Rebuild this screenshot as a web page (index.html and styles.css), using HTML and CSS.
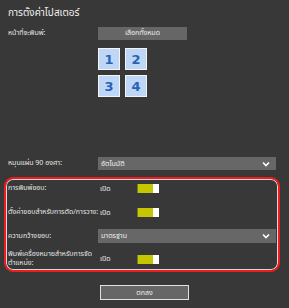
FILE: index.html
```html
<!DOCTYPE html>
<html lang="th">
<head>
<meta charset="utf-8">
<link rel="stylesheet" href="styles.css">
</head>
<body>
<div class="panel">
  <h1 class="title">การตั้งค่าโปสเตอร์</h1>
  <div class="row row-pages">
    <span class="label">หน้าที่จะพิมพ์:</span>
    <button class="btn">เลือกทั้งหมด</button>
  </div>
  <div class="tiles">
    <div class="tile">1</div>
    <div class="tile">2</div>
    <div class="tile">3</div>
    <div class="tile">4</div>
  </div>
  <div class="row row-rotate">
    <span class="label">หมุนแผ่น 90 องศา:</span>
    <div class="select"><span>อัตโนมัติ</span><svg class="chev" width="8" height="6" viewBox="0 0 8 6"><path d="M1 1.5 L4 4.5 L7 1.5" fill="none" stroke="#fff" stroke-width="1.6"/></svg></div>
  </div>
  <div class="box">
    <div class="row r1">
      <span class="label">การพิมพ์ขอบ:</span>
      <div class="val"><span class="on">เปิด</span><span class="toggle"><span class="knob"></span></span></div>
    </div>
    <div class="row r2">
      <span class="label">ตั้งค่าขอบสำหรับการตัด/การวาง:</span>
      <div class="val"><span class="on">เปิด</span><span class="toggle"><span class="knob"></span></span></div>
    </div>
    <div class="row r3">
      <span class="label">ความกว้างขอบ:</span>
      <div class="select"><span>มาตรฐาน</span><svg class="chev" width="8" height="6" viewBox="0 0 8 6"><path d="M1 1.5 L4 4.5 L7 1.5" fill="none" stroke="#fff" stroke-width="1.6"/></svg></div>
    </div>
    <div class="row r4">
      <span class="label two">พิมพ์เครื่องหมายสำหรับการจัด<br>ตำแหน่ง:</span>
      <div class="val"><span class="on">เปิด</span><span class="toggle"><span class="knob"></span></span></div>
    </div>
  </div>
  <div class="footer">
    <button class="ok">ตกลง</button>
  </div>
</div>
</body>
</html>
```
FILE: styles.css
```css
html, body {
  margin: 0;
  padding: 0;
  background: #383838;
  width: 289px;
  height: 308px;
  overflow: hidden;
}
body {
  font-family: "Tahoma", "Noto Sans Thai", "Noto Sans", "DejaVu Sans", sans-serif;
  color: #e8e8e8;
}
.panel {
  padding: 6px 13px 0 8px;
}
.title {
  margin: 0;
  font-size: 10px;
  font-weight: normal;
  line-height: 14px;
  height: 14px;
  color: #f2f2f2;
}
.row {
  display: grid;
  grid-template-columns: 90px 178px;
  align-items: center;
}
.label {
  font-size: 7px;
  line-height: 9px;
  color: #e6e6e6;
  white-space: nowrap;
}
.row-pages {
  margin-top: 7px;
  height: 13px;
}
.btn {
  width: 89px;
  height: 13px;
  border: 0;
  padding: 0;
  background: #666;
  color: #eee;
  font-family: inherit;
  font-size: 7px;
  line-height: 13px;
}
.tiles {
  margin: 8px 0 0 90px;
  display: grid;
  grid-template-columns: 22px 22px;
  grid-auto-rows: 22px;
  column-gap: 5px;
  row-gap: 5px;
  width: 49px;
  height: 49px;
}
.tile {
  box-sizing: border-box;
  border: 1px solid #f4f4f4;
  background: #bfd7f7;
  color: #2b62b4;
  font-family: "DejaVu Sans", sans-serif;
  font-weight: bold;
  font-size: 13px;
  display: flex;
  align-items: center;
  justify-content: center;
}
.row-rotate {
  margin-top: 60px;
  height: 13px;
}
.select {
  box-sizing: border-box;
  height: 13px;
  width: 178px;
  background: #676767;
  display: flex;
  align-items: center;
  justify-content: space-between;
  padding: 0 6px 0 3px;
  font-size: 7px;
  color: #f0f0f0;
}
.chev {
  display: block;
}
.box {
  margin: 7px 0 0 -4px;
  width: 276px;
  height: 95px;
  box-sizing: border-box;
  border: 2px solid #ee1c1c;
  border-radius: 9px;
  box-shadow: inset 0 0 0 1px #d8d8d8;
  padding: 2px 0 0 2px;
}
.box .row {
  grid-template-columns: 90px 178px;
}
.r1 { height: 15px; }
.r2 { height: 15px; margin-top: 9px; }
.r3 { height: 14px; margin-top: 9px; }
.r3 .select { height: 14px; }
.r4 { height: 20px; margin-top: 6px; }
.label.two {
  white-space: normal;
  line-height: 9px;
}
.val {
  display: flex;
  align-items: center;
  padding-left: 2px;
}
.on {
  width: 37px;
  font-size: 7px;
  color: #f0f0f0;
}
.toggle {
  position: relative;
  box-sizing: border-box;
  width: 22px;
  height: 9px;
  background: #c6c600;
  border-left: 1px solid #7a7a20;
  display: block;
}
.knob {
  position: absolute;
  right: 0;
  top: 0;
  width: 6px;
  height: 9px;
  background: #ffffff;
}
.footer {
  display: flex;
  margin-top: 13px;
  padding-left: 92px;
}
.ok {
  box-sizing: border-box;
  width: 89px;
  height: 15px;
  border: 1px solid #e0e0e0;
  background: #666;
  color: #eee;
  font-family: inherit;
  font-size: 7px;
  padding: 0;
}
```
